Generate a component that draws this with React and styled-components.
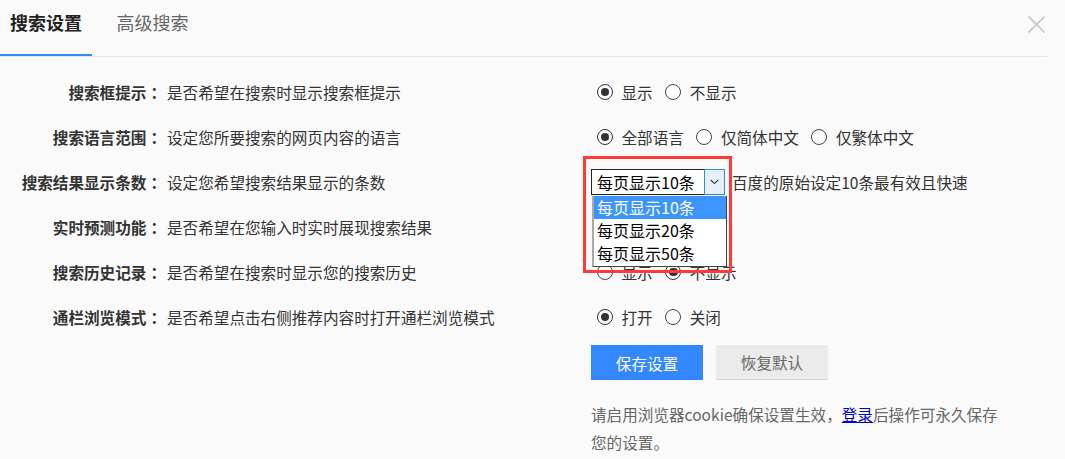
import React from "react";
import styled, { createGlobalStyle, css } from "styled-components";

const GlobalStyle = createGlobalStyle`
  html, body { margin: 0; padding: 0; background: #fafafa; }
  body {
    font-family: "Noto Sans CJK SC", "Noto Sans", sans-serif;
    font-size: 15.6px;
    color: #333;
    text-spacing-trim: space-all;
  }
`;

const Page = styled.div`
  width: 1065px;
  height: 459px;
  overflow: hidden;
  background: #fafafa;
`;

const Header = styled.div`
  width: 1047px;
  height: 56px;
  display: flex;
  justify-content: space-between;
  align-items: flex-start;
  border-bottom: 1px solid #e6e6e6;
`;

const Tabs = styled.div`
  display: flex;
  gap: 14.5px;
`;

const Tab = styled.div`
  box-sizing: border-box;
  height: 56px;
  padding: 10px 10px 0;
  font-size: 18px;
  line-height: 25px;
  color: #666;
  ${(p) =>
    p.$active &&
    css`
      color: #222;
      font-weight: bold;
      border-bottom: 2px solid #3388ff;
    `}
`;

const Close = styled.div`
  width: 17px;
  height: 17px;
  margin-top: 16px;
  margin-right: 2px;
  display: flex;
`;

const Body = styled.div`
  padding-top: 12.5px;
`;

const Row = styled.div`
  display: grid;
  grid-template-columns: 167px 424px 1fr;
  align-items: center;
  height: 45px;
  line-height: 20px;
`;

const Label = styled.div`
  text-align: right;
  font-weight: bold;
  color: #333;
  white-space: nowrap;
  padding-right: 5px;
`;

const Colon = styled.span`
  font-family: "Noto Sans CJK TC", "Noto Sans CJK SC", sans-serif;
`;

const Desc = styled.div`
  color: #333;
  white-space: nowrap;
`;

const Control = styled.div`
  display: flex;
  align-items: center;
  white-space: nowrap;
`;

const RadioGroup = styled.div`
  display: flex;
  align-items: center;
  gap: 12.5px;
  padding-left: 6px;
`;

const Option = styled.label`
  display: flex;
  align-items: center;
  color: #333;
`;

const Radio = styled.span`
  position: relative;
  box-sizing: border-box;
  width: 16px;
  height: 16px;
  margin-right: 8.5px;
  border-radius: 50%;
  border: 1px solid #444;
  background: #fff;
  flex-shrink: 0;
  ${(p) =>
    p.$checked &&
    css`
      border: 1.6px solid #333;
      &::after {
        content: "";
        position: absolute;
        inset: 2.6px;
        border-radius: 50%;
        background: #333;
      }
    `}
`;

const SelectWrap = styled.div`
  position: relative;
  display: flex;
  height: 26px;
`;

const SelectValue = styled.div`
  box-sizing: border-box;
  width: 113px;
  height: 26px;
  padding-left: 5px;
  border: 1px solid #222;
  border-right: none;
  background: #fff;
  color: #000;
  font-size: 16px;
  line-height: 24px;
`;

const SelectArrow = styled.div`
  box-sizing: border-box;
  width: 21px;
  height: 26px;
  border: 1px solid #2f8ae0;
  background: #e4f0fb;
  display: flex;
  align-items: center;
  justify-content: center;
`;

const Dropdown = styled.ul`
  position: absolute;
  top: 27px;
  left: 1px;
  width: 135px;
  box-sizing: border-box;
  margin: 0;
  padding: 0 0 1px;
  list-style: none;
  background: #fff;
  border-left: 2px solid #a9a9a9;
  border-right: 1px solid #444;
  border-bottom: 1px solid #444;
  z-index: 2;
`;

const DropItem = styled.li`
  height: 23px;
  line-height: 23px;
  padding-left: 3px;
  font-size: 16px;
  color: #000;
  ${(p) =>
    p.$selected &&
    css`
      background: #3c95ff;
      color: #fff;
    `}
`;

const Highlight = styled.div`
  position: absolute;
  left: -8px;
  top: -13px;
  width: 149px;
  height: 117px;
  box-sizing: border-box;
  border: 3px solid #ff3838;
  pointer-events: none;
  z-index: 3;
`;

const Hint = styled.span`
  margin-left: 7px;
  color: #333;
`;

const Footer = styled.div`
  padding-left: 591px;
  padding-top: 5.5px;
`;

const Buttons = styled.div`
  display: flex;
  gap: 13px;
`;

const Button = styled.button`
  box-sizing: border-box;
  width: 112px;
  height: 35px;
  padding: 0;
  border: none;
  font-family: inherit;
  font-size: 15.6px;
  cursor: pointer;
  ${(p) =>
    p.$primary
      ? css`
          background: #3388ff;
          color: #fff;
        `
      : css`
          background: #ebebeb;
          color: #666;
          border-bottom: 1px solid #d4d4d4;
        `}
`;

const Note = styled.p`
  width: 419px;
  margin: 20px 0 0;
  color: #666;
  line-height: 28px;
`;

const Link = styled.a`
  color: #0000cc;
  text-decoration: underline;
`;

const Chevron = () => (
  <svg width="9" height="6" viewBox="0 0 9 6">
    <path d="M0.8 1 L4.5 4.6 L8.2 1" fill="none" stroke="#333" strokeWidth="1.1" />
  </svg>
);

const CloseIcon = () => (
  <svg width="17" height="17" viewBox="0 0 17 17">
    <path d="M0.5 0.5 L16.5 16.5 M16.5 0.5 L0.5 16.5" stroke="#c6c6c6" strokeWidth="1.6" fill="none" />
  </svg>
);

const RadioSet = ({ options, value }) => (
  <RadioGroup>
    {options.map((o, i) => (
      <Option key={o}>
        <Radio $checked={i === value} />
        {o}
      </Option>
    ))}
  </RadioGroup>
);

const rows = [
  { label: "搜索框提示", desc: "是否希望在搜索时显示搜索框提示", options: ["显示", "不显示"], value: 0 },
  { label: "搜索语言范围", desc: "设定您所要搜索的网页内容的语言", options: ["全部语言", "仅简体中文", "仅繁体中文"], value: 0 },
  { label: "搜索结果显示条数", desc: "设定您希望搜索结果显示的条数", select: true },
  { label: "实时预测功能", desc: "是否希望在您输入时实时展现搜索结果", options: ["开启", "关闭"], value: 0 },
  { label: "搜索历史记录", desc: "是否希望在搜索时显示您的搜索历史", options: ["显示", "不显示"], value: 1 },
  { label: "通栏浏览模式", desc: "是否希望点击右侧推荐内容时打开通栏浏览模式", options: ["打开", "关闭"], value: 0 },
];

const counts = ["每页显示10条", "每页显示20条", "每页显示50条"];

export default function App() {
  return (
    <Page>
      <GlobalStyle />
      <Header>
        <Tabs>
          <Tab $active>搜索设置</Tab>
          <Tab>高级搜索</Tab>
        </Tabs>
        <Close>
          <CloseIcon />
        </Close>
      </Header>
      <Body>
        {rows.map((r) => (
          <Row key={r.label}>
            <Label>
              {r.label}
              <Colon>：</Colon>
            </Label>
            <Desc>{r.desc}</Desc>
            <Control>
              {r.select ? (
                <>
                  <SelectWrap>
                    <SelectValue>{counts[0]}</SelectValue>
                    <SelectArrow>
                      <Chevron />
                    </SelectArrow>
                    <Dropdown>
                      {counts.map((c, i) => (
                        <DropItem key={c} $selected={i === 0}>
                          {c}
                        </DropItem>
                      ))}
                    </Dropdown>
                    <Highlight />
                  </SelectWrap>
                  <Hint>百度的原始设定10条最有效且快速</Hint>
                </>
              ) : (
                <RadioSet options={r.options} value={r.value} />
              )}
            </Control>
          </Row>
        ))}
        <Footer>
          <Buttons>
            <Button $primary>保存设置</Button>
            <Button>恢复默认</Button>
          </Buttons>
          <Note>
            请启用浏览器cookie确保设置生效，<Link href="#">登录</Link>后操作可永久保存您的设置。
          </Note>
        </Footer>
      </Body>
    </Page>
  );
}
